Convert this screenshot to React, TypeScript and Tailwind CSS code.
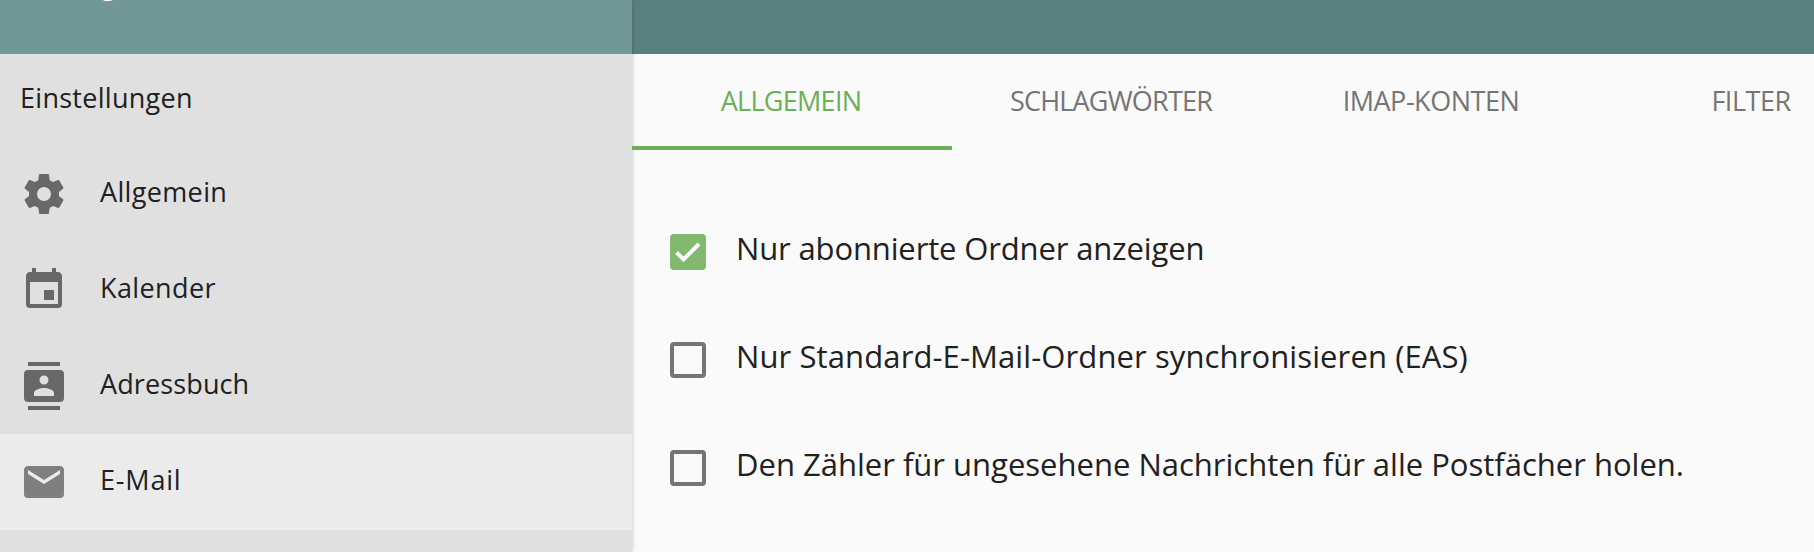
import clsx from 'clsx';

type NavItem = {
  label: string;
  path: string;
  spacing: string;
  active?: boolean;
};

const NAV_ITEMS: NavItem[] = [
  {
    label: 'Allgemein',
    spacing: 'tracking-[0.35px]',
    path: 'M12,15.5A3.5,3.5 0 0,1 8.5,12A3.5,3.5 0 0,1 12,8.5A3.5,3.5 0 0,1 15.5,12A3.5,3.5 0 0,1 12,15.5M19.43,12.97C19.47,12.65 19.5,12.33 19.5,12C19.5,11.67 19.47,11.34 19.43,11L21.54,9.37C21.73,9.22 21.78,8.95 21.66,8.73L19.66,5.27C19.54,5.05 19.27,4.96 19.05,5.05L16.56,6.05C16.04,5.66 15.5,5.32 14.87,5.07L14.5,2.42C14.46,2.18 14.25,2 14,2H10C9.75,2 9.54,2.18 9.5,2.42L9.13,5.07C8.5,5.32 7.96,5.66 7.44,6.05L4.95,5.05C4.73,4.96 4.46,5.05 4.34,5.27L2.34,8.73C2.21,8.95 2.27,9.22 2.46,9.37L4.57,11C4.53,11.34 4.5,11.67 4.5,12C4.5,12.33 4.53,12.65 4.57,12.97L2.46,14.63C2.27,14.78 2.21,15.05 2.34,15.27L4.34,18.73C4.46,18.95 4.73,19.03 4.95,18.95L7.44,17.94C7.96,18.34 8.5,18.68 9.13,18.93L9.5,21.58C9.54,21.82 9.75,22 10,22H14C14.25,22 14.46,21.82 14.5,21.58L14.87,18.93C15.5,18.67 16.04,18.34 16.56,17.94L19.05,18.95C19.27,19.03 19.54,18.95 19.66,18.73L21.66,15.27C21.78,15.05 21.73,14.78 21.54,14.63L19.43,12.97Z',
  },
  {
    label: 'Kalender',
    spacing: 'tracking-[0.4px]',
    path: 'M19,19H5V8H19M16,1V3H8V1H6V3H5C3.89,3 3,3.89 3,5V19A2,2 0 0,0 5,21H19A2,2 0 0,0 21,19V5C21,3.89 20.1,3 19,3H18V1M17,12H12V17H17V12Z',
  },
  {
    label: 'Adressbuch',
    spacing: 'tracking-[0.12px]',
    path: 'M20,0H4V2H20V0M4,24H20V22H4V24M20,4H4A2,2 0 0,0 2,6V18A2,2 0 0,0 4,20H20A2,2 0 0,0 22,18V6A2,2 0 0,0 20,4M12,6.75A2.25,2.25 0 0,1 14.25,9A2.25,2.25 0 0,1 12,11.25A2.25,2.25 0 0,1 9.75,9A2.25,2.25 0 0,1 12,6.75M17,17H7V15.5C7,13.83 10.33,13 12,13C13.67,13 17,13.83 17,15.5V17Z',
  },
  {
    label: 'E-Mail',
    spacing: 'tracking-[0.8px]',
    active: true,
    path: 'M20,8L12,13L4,8V6L12,11L20,6M20,4H4C2.89,4 2,4.89 2,6V18A2,2 0 0,0 4,20H20A2,2 0 0,0 22,18V6C22,4.89 21.1,4 20,4Z',
  },
];

const TABS = [
  { label: 'ALLGEMEIN', spacing: 'tracking-[-0.7px]', active: true },
  { label: 'SCHLAGWÖRTER', spacing: 'tracking-[-0.8px]' },
  { label: 'IMAP-KONTEN', spacing: 'tracking-[-0.47px]' },
  { label: 'FILTER', spacing: 'tracking-[-0.5px]' },
];

const OPTIONS = [
  { label: 'Nur abonnierte Ordner anzeigen', spacing: 'tracking-[-0.14px]', checked: true },
  { label: 'Nur Standard-E-Mail-Ordner synchronisieren (EAS)', spacing: 'tracking-[0.11px]', checked: false },
  { label: 'Den Zähler für ungesehene Nachrichten für alle Postfächer holen.', spacing: 'tracking-[0px]', checked: false },
];

function Checkbox({ checked }: { checked: boolean }) {
  if (!checked) {
    return <span className="size-9 shrink-0 rounded-[4px] border-4 border-[#757575]" />;
  }
  return (
    <span className="flex size-9 shrink-0 items-center justify-center rounded-[4px] bg-[#81b96f]">
      <svg viewBox="0 0 36 36" className="size-9">
        <path d="M6.5 18.5L13.5 25.5L29 10" fill="none" stroke="#fafafa" strokeWidth="4" />
      </svg>
    </span>
  );
}

function Sidebar() {
  return (
    <aside className="z-10 flex w-[632px] shrink-0 flex-col bg-[#e0e0e0] shadow-[0_0_4px_rgba(0,0,0,0.25)]">
      <div className="h-[54px] shrink-0 overflow-hidden bg-[#719896] pl-[101px] text-[27px] leading-none text-white">
        <span className="-mt-[30px] block">g</span>
      </div>
      <h2 className="flex h-[92px] shrink-0 items-center pb-[5px] pl-5 text-[27px] leading-none tracking-[0.28px]">
        Einstellungen
      </h2>
      <nav>
        {NAV_ITEMS.map((item) => (
          <a
            key={item.label}
            className={clsx('flex h-24 items-center gap-8 pl-5', item.active && 'bg-[#ebebeb]')}
          >
            <svg
              viewBox="0 0 24 24"
              className={clsx('size-12 shrink-0', item.active ? 'fill-[#7f7f7f]' : 'fill-[#686868]')}
            >
              <path d={item.path} />
            </svg>
            <span className={clsx('pb-[5px] text-[27px] leading-none', item.spacing)}>{item.label}</span>
          </a>
        ))}
      </nav>
    </aside>
  );
}

export default function App() {
  return (
    <div className="flex h-[552px] w-[1814px] overflow-hidden bg-[#fafafa] font-['Open_Sans','Noto_Sans',sans-serif] text-[#212121]">
      <Sidebar />
      <main className="min-w-0 flex-1 overflow-hidden">
        <div className="h-[54px] bg-[#5a807e]" />
        <div className="flex h-24">
          {TABS.map((tab) => (
            <button
              key={tab.label}
              className={clsx(
                'relative z-20 flex w-80 shrink-0 items-center justify-center border-b-4 pr-[2px] text-[27px] leading-none',
                tab.active ? 'border-[#6bb056] text-[#6bb056]' : 'border-transparent text-[#757575]',
              )}
            >
              <span className={tab.spacing}>{tab.label}</span>
            </button>
          ))}
        </div>
        <div className="flex flex-col gap-[72px] pt-[84px] pl-[38px]">
          {OPTIONS.map((option) => (
            <label key={option.label} className="flex h-9 items-center gap-[30px]">
              <Checkbox checked={option.checked} />
              <span className={clsx('pb-[7px] text-[31px] leading-none whitespace-nowrap', option.spacing)}>
                {option.label}
              </span>
            </label>
          ))}
        </div>
      </main>
    </div>
  );
}
